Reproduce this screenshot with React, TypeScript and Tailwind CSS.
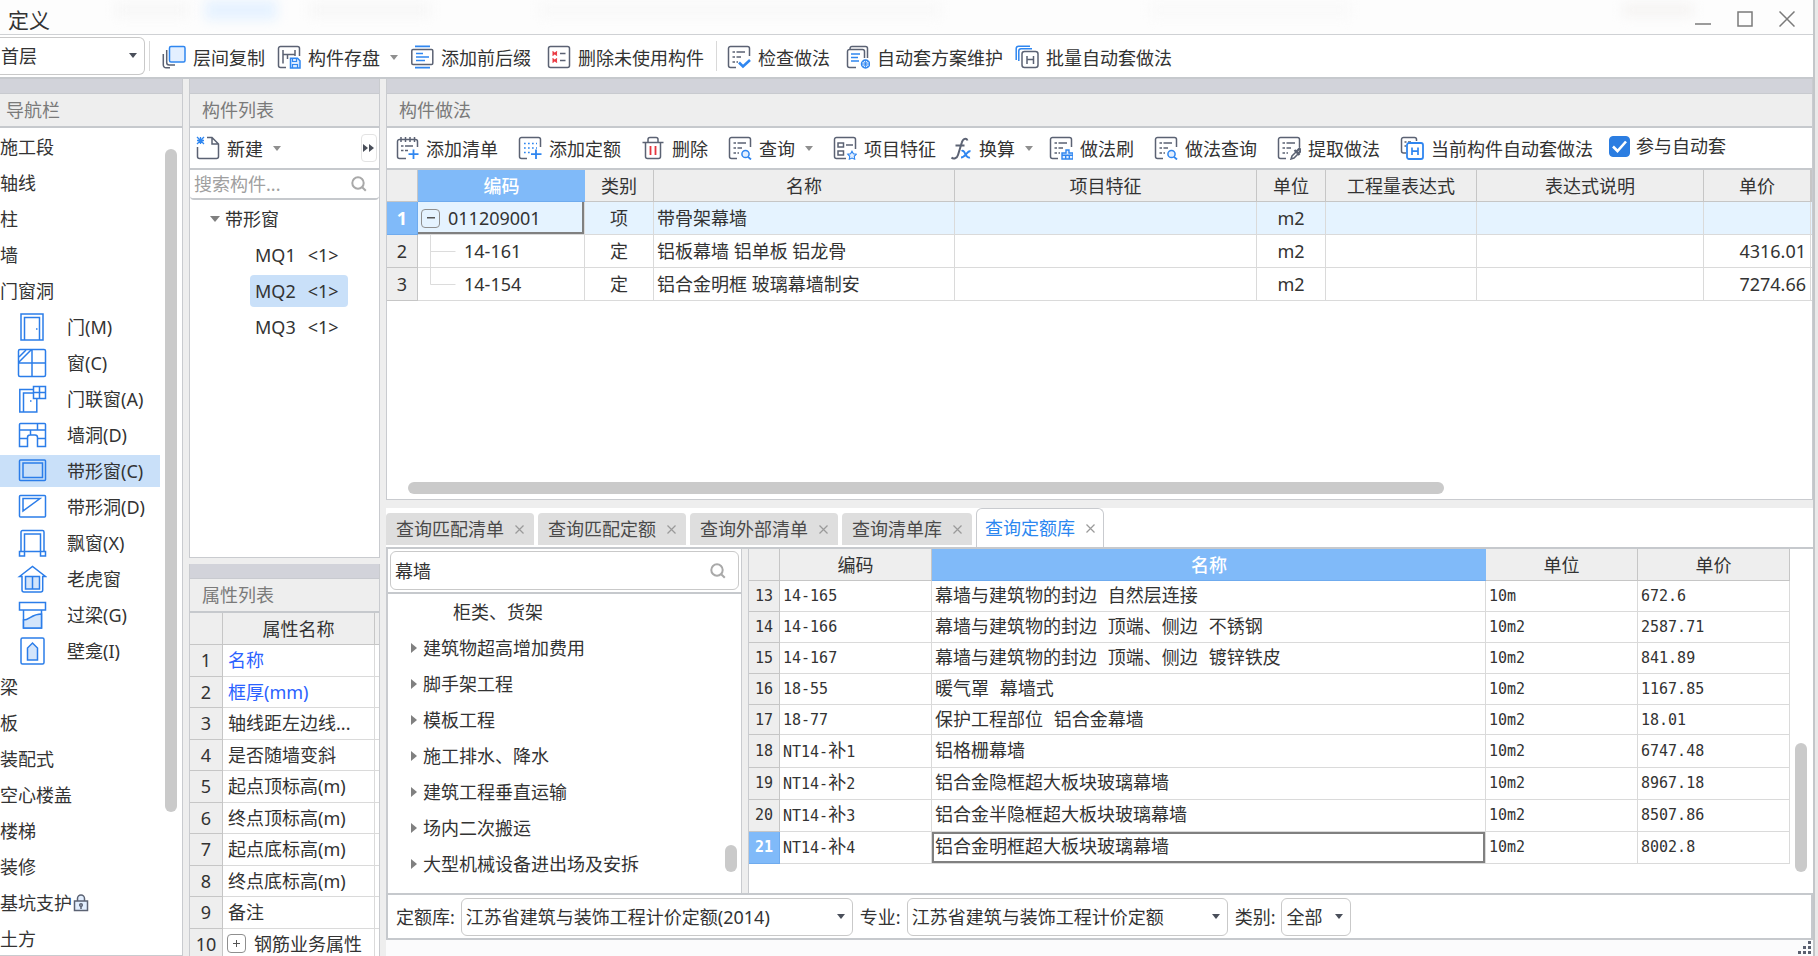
import React from 'react';

const INK = '#5b6273';
const BLUE = '#2f86f0';

function Icon({ children }: { children: React.ReactNode }) {
  return (
    <svg width="24" height="24" viewBox="0 0 24 24" fill="none" stroke={INK} strokeWidth="1.5" className="shrink-0" aria-hidden="true">
      {children}
    </svg>
  );
}

const OpenFrame = () => <path d="M9 22.5H3.5a2 2 0 0 1-2-2v-17a2 2 0 0 1 2-2h17a2 2 0 0 1 2 2V11" />;
const ListLines = () => <path d="M5.5 7H8M9.5 7H18M5.500 12H8M9.500 12H14M5.500 17H8M9.500 17H11" />;

const CopyLayersIcon = () => (
  <Icon>
    <path d="M4.700 5v12.500a2.500 2.500 0 0 0 2.500 2.500H13M1.300 9v11a2.700 2.700 0 0 0 2.700 2.700H8" />
    <rect x="7.500" y="1.500" width="15.500" height="15.500" rx="1.500" fill="#e3efff" stroke={BLUE} />
  </Icon>
);
const SaveIcon = () => (
  <Icon>
    <OpenFrame />
    <path d="M6 5v13.500M18 5v6M6 9.500h12M10.500 9.500V14" />
    <path d="M13.500 13.200h7l2.500 2.500V23h-9.500z" fill="#dbeaff" stroke={BLUE} />
    <path d="M15.500 13.500v3h4v-3M15.500 23v-3.500h5V23" stroke={BLUE} strokeWidth="1.200" />
  </Icon>
);
const AffixIcon = () => (
  <Icon>
    <rect x="1.800" y="4.500" width="21" height="15" rx="1.200" />
    <path d="M5 1.300h15M5 22.700h15M6 8.500h7M6 12h13M6 15.500h9" stroke={BLUE} strokeWidth="1.700" />
  </Icon>
);
const DeleteUnusedIcon = () => (
  <Icon>
    <rect x="1.500" y="1.500" width="21" height="21" rx="2" />
    <path d="M5.500 6.500l4.500 4M10 6.500l-4.500 4M5.500 8.500H10M5.500 13.500l4.500 4M10 13.500l-4.500 4M5.500 15.500H10" stroke="#ea3a42" strokeWidth="1.300" />
    <path d="M13 8.500h5.500M13 15.500h5.500" strokeWidth="1.700" />
  </Icon>
);
const CheckListIcon = () => (
  <Icon>
    <OpenFrame />
    <ListLines />
    <path d="M12 17.500l4 4 7-6.500" stroke={BLUE} strokeWidth="2.600" />
  </Icon>
);
const SchemeIcon = () => (
  <Icon>
    <path d="M10 22.500H3.500a2 2 0 0 1-2-2V6.500a2 2 0 0 1 2-2h13a2 2 0 0 1 2 2V13M4 4V3.500a2 2 0 0 1 2-2h13.500a2 2 0 0 1 2 2V13" />
    <path d="M5 9h9M5 12.500h7M5 16h8" stroke={BLUE} strokeWidth="1.700" />
    <circle cx="19.500" cy="19" r="4" fill="#dbeaff" stroke={BLUE} />
    <path d="M15.500 19h8M19.500 15v8M17 16l5 6M22 16l-5 6" stroke={BLUE} strokeWidth=".8" />
  </Icon>
);
const BatchIcon = () => (
  <Icon>
    <path d="M1.200 15V3.500a2.300 2.300 0 0 1 2.300-2.300H15M3.800 16V6a2.300 2.300 0 0 1 2.300-2.300H17" stroke={BLUE} />
    <rect x="7" y="6.500" width="16" height="16" rx="2.500" fill="#fff" />
    <path d="M12 11v8M18.500 11v8M12 14.500h6.500" />
  </Icon>
);
const AddListIcon = () => (
  <Icon>
    <path d="M11 22.500H4.500a2 2 0 0 1-2-2V5.500a2 2 0 0 1 2-2h16a2 2 0 0 1 2 2V11M6 1v5M10.500 1v5M15 1v5M19.500 1v5" />
    <path d="M6 10h2.500M10 10h8M6 14.500h2.500M10 14.500h3" />
    <path d="M18.500 13.500v9.500M13.500 18.200h10" stroke={BLUE} strokeWidth="1.800" />
  </Icon>
);
const AddQuotaIcon = () => (
  <Icon>
    <OpenFrame />
    <path d="M6 7.500h13M6 12h13M6 16.500h6" stroke={BLUE} strokeWidth="1.700" strokeDasharray="1.700 2.300" />
    <path d="M18 13.500V23M13 18.200h10.500" stroke={BLUE} strokeWidth="1.800" />
  </Icon>
);
const TrashIcon = () => (
  <Icon>
    <path d="M1.500 6.500h21M4.500 6.500V20.500a2 2 0 0 0 2 2h11a2 2 0 0 0 2-2V6.500M7 6V3.500a2 2 0 0 1 2-2h6a2 2 0 0 1 2 2V6" />
    <path d="M9.500 10v9M14.500 10v9" stroke="#e5343d" strokeWidth="1.800" />
  </Icon>
);
const QueryIcon = () => (
  <Icon>
    <OpenFrame />
    <ListLines />
    <circle cx="17.500" cy="18" r="3.600" fill="#e3efff" stroke={BLUE} />
    <path d="M20 20.800l3 2.700" stroke={BLUE} strokeWidth="1.800" />
  </Icon>
);
const FeatureIcon = () => (
  <Icon>
    <path d="M13 22.500H3.500a2 2 0 0 1-2-2v-17a2 2 0 0 1 2-2h17a2 2 0 0 1 2 2V13" />
    <path d="M5 7h5.500v4H5zM5 15h5.500v4H5zM13 9h7" />
    <path d="M19 15.200l1.400 2.500 2.900.5-2 2.100.4 2.900-2.700-1.200-2.700 1.200.4-2.900-2-2.100 2.900-.5z" fill="#e3efff" stroke={BLUE} strokeWidth="1.100" />
  </Icon>
);
const FxIcon = () => (
  <Icon>
    <path d="M19.500 4.500C18.500 2 15 2 13.800 6.500L10 19c-1 3.500-4.500 4.500-6.500 2.500M7.500 9.500h9" strokeWidth="2" />
    <path d="M13.500 15c4-2 3.500 8 8.500 6.500M22.500 15c-4 0-5 6.500-9.500 6.500" stroke={BLUE} strokeWidth="1.900" />
  </Icon>
);
const BrushIcon = () => (
  <Icon>
    <OpenFrame />
    <ListLines />
    <path d="M13 23v-6h4v-3h3v3h4v6z" fill="#e3efff" stroke={BLUE} strokeWidth="1.400" />
    <path d="M13 19.200h11M16.700 23v-3.500M20.300 23v-3.500" stroke={BLUE} strokeWidth="1.400" />
  </Icon>
);
const ExtractIcon = () => (
  <Icon>
    <OpenFrame />
    <ListLines />
    <path d="M14 23l1-3 4.500-4.500 2 2L17 22z" />
    <path d="M17.500 14l5 5M19.500 15.500l3-3 1.500 2-2.500 3z" strokeWidth="2.200" />
  </Icon>
);
const CurrentIcon = () => (
  <Icon>
    <path d="M6 17H3.500a2 2 0 0 1-2-2V3.500a2 2 0 0 1 2-2h11a2 2 0 0 1 2 2V5M4.500 6h2M4.500 10H6M8 6h3" />
    <rect x="7" y="7" width="16" height="16" rx="2" fill="#fff" stroke={BLUE} strokeWidth="1.800" />
    <path d="M12 11.500v7.500M18 11.500v7.500M12 15.200h6" stroke={BLUE} strokeWidth="1.700" />
  </Icon>
);
const NewIcon = () => (
  <Icon>
    <path d="M1.500 11v9.500a2 2 0 0 0 2 2h17a2 2 0 0 0 2-2V8l-6.500-6.500H11M16 1.500V8h6.500" />
    <path d="M1 1l7 7M8 1L1 8M1 4.500h7M4.500 1v7" stroke={BLUE} strokeWidth="1.300" />
  </Icon>
);

function Caret({ dark = false }: { dark?: boolean }) {
  return (
    <svg width="8" height="5" viewBox="0 0 8 5" className="shrink-0" aria-hidden="true">
      <path d="M0 0h8L4 5z" fill={dark ? '#4a4f5a' : '#8f8f8f'} />
    </svg>
  );
}

function Magnifier() {
  return (
    <svg width="16" height="16" viewBox="0 0 16 16" fill="none" stroke="#a9a9a9" strokeWidth="2" className="shrink-0" aria-hidden="true">
      <circle cx="7" cy="7" r="5.700" />
      <path d="M11.200 11.200l3.600 3.600" />
    </svg>
  );
}

type Tool = { label: string; icon: React.ReactNode; caret?: boolean; space?: 'tight' | 'normal' | 'wide' };

const spacing = { tight: 'mr-3', normal: 'mr-4', wide: 'mr-5' };

function ToolButton({ label, icon, caret, space = 'normal' }: Tool) {
  return (
    <button type="button" className={`flex shrink-0 items-center ${spacing[space]}`}>
      {icon}
      <span className="ml-[7px] whitespace-nowrap pt-0.5">{label}</span>
      {caret && (
        <span className="ml-2.5">
          <Caret />
        </span>
      )}
    </button>
  );
}

function PanelHead({ title, pad = 'pl-3' }: { title: string; pad?: string }) {
  return (
    <div className="shrink-0">
      <div className="h-[14px] bg-[#d2d3da]" />
      <h2 className={`flex h-[35px] items-center border-t border-b-2 border-t-[#c8cacf] border-b-[#c6c9cd] bg-[#eeeeee] text-[#7a7a7a] ${pad}`}>{title}</h2>
    </div>
  );
}

const G = ({ children }: { children: React.ReactNode }) => (
  <svg width="30" height="30" viewBox="0 0 30 30" fill="none" stroke="#2b7de9" strokeWidth="1.500" className="shrink-0" aria-hidden="true">
    {children}
  </svg>
);

const openings = [
  { label: '门(M)', icon: <G><path d="M4 28V2h22v26zM7.500 28V5.500h15V28M19 17h1.500" /></G> },
  { label: '窗(C)', icon: <G><rect x="1.500" y="1.500" width="27" height="27" rx="1.500" /><path d="M15 1.500v27M1.500 15h27M2 9l7-7M2 14L14 2" /></G> },
  { label: '门联窗(A)', icon: <G><path d="M16 5.500H2.800V28h17V14M6.500 28V9H16M13 17h1.500M16.500 2.500h12v12h-12zM22.500 2.500v12M16.500 8.500h12" /></G> },
  { label: '墙洞(D)', icon: <G><path d="M3.500 3.500h24a1 1 0 0 1 1 1V26.500h-8v-9a2.500 2.500 0 0 0-2.500-2.500h-5a2.500 2.500 0 0 0-2.500 2.500v9h-8V4.500a1 1 0 0 1 1-1zM2.500 10h26M20.500 3.500V10M13.500 10v5M2.500 18.500h8M20.500 18.500h8" /></G> },
  { label: '带形窗(C)', icon: <G><rect x="2.500" y="4" width="26" height="20.500" rx="1" /><rect x="6" y="7" width="19.500" height="14.500" /></G>, active: true },
  { label: '带形洞(D)', icon: <G><rect x="2.500" y="3.500" width="26" height="21.500" rx="1" /><path d="M6 6.500h17L6 19z" /></G> },
  { label: '飘窗(X)', icon: <G><path d="M4 23V4a1.500 1.500 0 0 1 1.500-1.500h20A1.500 1.500 0 0 1 27 4v19M7.500 23V6H23.500v17M7 23.500h17M2.500 23.500h5V28h-5zM23.500 23.500h5V28h-5z" /></G> },
  { label: '老虎窗', icon: <G><path d="M2.500 12.500L15.500 2.500l13 10h-2.800V26a2 2 0 0 1-2 2H7a2 2 0 0 1-2-2V12.500z" /><path d="M8.500 12.500h14V25h-14z" fill="#d3e5fb" /><path d="M15.500 12.500V25" /></G> },
  { label: '过梁(G)', icon: <G><path d="M2.500 2.500h26v7.500h-26zM6.500 10v18h18V10" /><path d="M6.500 20c6 0 8-6 18-6v14h-18z" fill="#d3e5fb" /></G> },
  { label: '壁龛(I)', icon: <G><rect x="4" y="2" width="23" height="26" rx="1.500" /><path d="M10.500 24V12l5-5 5 5v12z" fill="#d3e5fb" /></G> },
] as { label: string; icon: React.ReactNode; active?: boolean }[];

const bidRows = [
  { n: 1, code: '011209001', kind: '项', name: '带骨架幕墙', unit: 'm2', price: '' },
  { n: 2, code: '14-161', kind: '定', name: '铝板幕墙 铝单板 铝龙骨', unit: 'm2', price: '4316.01' },
  { n: 3, code: '14-154', kind: '定', name: '铝合金明框 玻璃幕墙制安', unit: 'm2', price: '7274.66' },
];

const quotaRows = [
  { n: 13, code: '14-165', name: '幕墙与建筑物的封边 自然层连接', unit: '10m', price: '672.6' },
  { n: 14, code: '14-166', name: '幕墙与建筑物的封边 顶端、侧边 不锈钢', unit: '10m2', price: '2587.71' },
  { n: 15, code: '14-167', name: '幕墙与建筑物的封边 顶端、侧边 镀锌铁皮', unit: '10m2', price: '841.89' },
  { n: 16, code: '18-55', name: '暖气罩 幕墙式', unit: '10m2', price: '1167.85' },
  { n: 17, code: '18-77', name: '保护工程部位 铝合金幕墙', unit: '10m2', price: '18.01' },
  { n: 18, code: 'NT14-补1', name: '铝格栅幕墙', unit: '10m2', price: '6747.48' },
  { n: 19, code: 'NT14-补2', name: '铝合金隐框超大板块玻璃幕墙', unit: '10m2', price: '8967.18' },
  { n: 20, code: 'NT14-补3', name: '铝合金半隐框超大板块玻璃幕墙', unit: '10m2', price: '8507.86' },
  { n: 21, code: 'NT14-补4', name: '铝合金明框超大板块玻璃幕墙', unit: '10m2', price: '8002.8' },
];

const properties = ['名称', '框厚(mm)', '轴线距左边线...', '是否随墙变斜', '起点顶标高(m)', '终点顶标高(m)', '起点底标高(m)', '终点底标高(m)', '备注', '钢筋业务属性'];

const chapters = ['建筑物超高增加费用', '脚手架工程', '模板工程', '施工排水、降水', '建筑工程垂直运输', '场内二次搬运', '大型机械设备进出场及安拆'];

const mono = "font-['DejaVu_Sans_Mono','Noto_Sans_CJK_SC',monospace]";
const th = 'border-r border-b border-[#c6c6c6] bg-[#eeeeee] p-0 font-normal';
const rowNo = 'border-r border-b border-[#c6c6c6] bg-[#eeeeee] p-0 text-center';
const rowNoOn = 'border-r border-b border-[#6fabee] bg-[#80baf9] p-0 text-center font-bold text-white';
const td = 'border-r border-b border-[#dadada] p-0';

function TitleBar() {
  const btn = 'flex size-6 items-center justify-center';
  return (
    <header className="relative flex h-[34px] shrink-0 items-center overflow-hidden bg-[#fdfdfd]">
      <div className="absolute top-0 left-[205px] h-5 w-[72px] bg-[#e6f2ff] blur-[6px]" />
      <div className="absolute top-1 left-[116px] h-3 w-[72px] bg-[#f6f6f6] blur-[6px]" />
      <div className="absolute top-1 left-[310px] h-3 w-[120px] bg-[#f6f6f6] blur-[6px]" />
      <div className="absolute top-1 left-[540px] h-3 w-[400px] bg-[#f8f8f8] blur-[6px]" />
      <div className="absolute top-1 left-[1150px] h-3 w-[200px] bg-[#f9f9f9] blur-[6px]" />
      <div className="absolute top-1 right-[120px] h-3 w-[70px] bg-[#f5f3f2] blur-[6px]" />
      <h1 className="relative ml-2 pt-1.5 text-[21px] leading-6 text-[#333333]">定义</h1>
      <div className="relative mr-[14px] ml-auto flex gap-[18px] pt-1">
        <button type="button" aria-label="最小化" className={btn}>
          <svg width="16" height="16" viewBox="0 0 16 16" stroke="#7a7a7a" strokeWidth="1.500" fill="none"><path d="M0 13h16" /></svg>
        </button>
        <button type="button" aria-label="最大化" className={btn}>
          <svg width="16" height="16" viewBox="0 0 16 16" stroke="#7a7a7a" strokeWidth="1.500" fill="none"><rect x="1" y="1" width="14" height="14" /></svg>
        </button>
        <button type="button" aria-label="关闭" className={btn}>
          <svg width="16" height="16" viewBox="0 0 16 16" stroke="#7a7a7a" strokeWidth="1.500" fill="none"><path d="M.5.5l15 15M15.500.5l-15 15" /></svg>
        </button>
      </div>
    </header>
  );
}

function MainToolbar() {
  return (
    <div className="flex h-[45px] shrink-0 items-center border-t border-b-2 border-t-[#cfd1d4] border-b-[#c6c9cd] bg-white">
      <div className="relative">
        <select aria-label="楼层" className="block h-[38px] w-[145px] appearance-none rounded-r-md border border-l-0 border-[#c9c9c9] bg-white pl-px">
          <option>首层</option>
        </select>
        <span className="pointer-events-none absolute top-4 right-2"><Caret dark /></span>
      </div>
      <span className="mr-3 ml-1 h-[30px] w-px bg-[#d9d9d9]" />
      <div className="flex items-center pt-0.5">
        <ToolButton label="层间复制" icon={<CopyLayersIcon />} space="tight" />
        <ToolButton label="构件存盘" icon={<SaveIcon />} caret space="tight" />
        <ToolButton label="添加前后缀" icon={<AffixIcon />} />
        <ToolButton label="删除未使用构件" icon={<DeleteUnusedIcon />} space="tight" />
      </div>
      <span className="mr-2.5 h-[30px] w-px bg-[#d9d9d9]" />
      <div className="flex items-center pt-0.5">
        <ToolButton label="检查做法" icon={<CheckListIcon />} />
        <ToolButton label="自动套方案维护" icon={<SchemeIcon />} space="tight" />
        <ToolButton label="批量自动套做法" icon={<BatchIcon />} />
      </div>
    </div>
  );
}

function NavRow({ label, lock }: { label: string; lock?: boolean }) {
  return (
    <li className="flex h-9 items-center">
      {label}
      {lock && (
        <svg width="16" height="18" viewBox="0 0 16 18" fill="none" stroke={INK} strokeWidth="1.500" className="ml-px" aria-hidden="true">
          <path d="M1.500 7h13v9.500h-13zM4.500 7V4.500a3.500 3.500 0 0 1 7 0V7M8 12v3" fill="#e3efff" />
          <circle cx="8" cy="11" r="1.300" />
        </svg>
      )}
    </li>
  );
}

function Navigator() {
  return (
    <nav className="flex w-[183px] shrink-0 flex-col overflow-hidden border-r border-b border-[#c9cbcf] bg-white">
      <PanelHead title="导航栏" pad="pl-1.5" />
      <div className="relative min-h-0 flex-1 overflow-hidden pt-px">
        <ul>
          {['施工段', '轴线', '柱', '墙', '门窗洞'].map((t) => <NavRow key={t} label={t} />)}
          {openings.map((o) => (
            <li key={o.label} className="flex h-9 items-center">
              <div className={`flex h-8 w-[160px] items-center gap-5 pl-[17px] ${o.active ? 'bg-[#c9e0f9]' : ''}`}>
                {o.icon}
                <span className="whitespace-nowrap">{o.label}</span>
              </div>
            </li>
          ))}
          {['梁', '板', '装配式', '空心楼盖', '楼梯', '装修'].map((t) => <NavRow key={t} label={t} />)}
          <NavRow label="基坑支护" lock />
          <NavRow label="土方" />
        </ul>
        <div className="absolute top-[21px] right-[5px] h-[663px] w-3 rounded-full bg-[#cacaca]" />
      </div>
    </nav>
  );
}

function ComponentList() {
  return (
    <section className="flex min-h-0 flex-1 flex-col overflow-hidden border border-t-0 border-[#c9cbcf] bg-white">
      <PanelHead title="构件列表" />
      <div className="flex h-[42px] shrink-0 items-center border-b-2 border-[#c6c9cd] pl-1.5">
        <ToolButton label="新建" icon={<NewIcon />} caret />
        <button type="button" aria-label="更多" className="mr-0.5 ml-auto flex h-7 w-4 items-center justify-center rounded border border-[#e3e3e3]">
          <svg width="12" height="8" viewBox="0 0 12 8" fill="#4a4f5a"><path d="M0 0l5 4-5 4zM6 0l5 4-5 4z" /></svg>
        </button>
      </div>
      <div className="flex h-[30px] shrink-0 items-center rounded border-b-2 border-[#c6c9cd] pr-3 pl-1">
        <input aria-label="搜索构件" placeholder="搜索构件..." className="min-w-0 flex-1 outline-none placeholder:text-[#a0a0a0]" />
        <Magnifier />
      </div>
      <ul className="pt-px">
        <li className="flex h-9 items-center gap-[5px] pl-5">
          <svg width="10" height="6" viewBox="0 0 10 6" aria-hidden="true"><path d="M0 0h10L5 6z" fill="#808080" /></svg>
          带形窗
        </li>
        {['MQ1', 'MQ2', 'MQ3'].map((m) => (
          <li key={m} className="flex h-9 items-center pl-[60px]">
            <span className={`flex h-8 w-[98px] items-center gap-3 rounded pl-[5px] ${m === 'MQ2' ? 'bg-[#c9e0f9]' : ''}`}>
              <span>{m}</span>
              <span>&lt;1&gt;</span>
            </span>
          </li>
        ))}
      </ul>
    </section>
  );
}

function PropertyList() {
  return (
    <section className="h-[392px] shrink-0 overflow-hidden border-x border-[#c9cbcf] bg-white">
      <PanelHead title="属性列表" />
      <table className="h-[347px] w-full table-fixed border-separate border-spacing-0">
        <colgroup>
          <col className="w-[33px]" />
          <col />
          <col className="w-1" />
        </colgroup>
        <thead>
          <tr className="h-8">
            <th className={th} />
            <th className={th}>属性名称</th>
            <th className="border-b border-[#c6c6c6] bg-[#eeeeee] p-0" />
          </tr>
        </thead>
        <tbody>
          {properties.map((p, i) => (
            <tr key={p}>
              <td className={rowNo}>{i + 1}</td>
              <td className={`${td} whitespace-nowrap ${i < 2 ? 'text-[#2b62ff]' : ''}`}>
                {i === 9 ? (
                  <span className="flex items-center gap-2 pl-1">
                    <button type="button" aria-label="展开" className="flex size-[19px] items-center justify-center rounded border border-[#8f8f8f]">
                      <svg width="7" height="7" viewBox="0 0 7 7" stroke="#555" fill="none"><path d="M0 3.500h7M3.500 0v7" /></svg>
                    </button>
                    {p}
                  </span>
                ) : (
                  <span className="pl-[5px]">{p}</span>
                )}
              </td>
              <td className="border-b border-[#dadada] p-0" />
            </tr>
          ))}
        </tbody>
      </table>
    </section>
  );
}

function CodeCell({ n, code }: { n: number; code: string }) {
  if (n === 1) {
    return (
      <div className="flex h-8 items-center gap-2 pl-[3px]">
        <button type="button" aria-label="折叠" className="flex size-[19px] items-center justify-center rounded-sm border border-[#8f8f8f]">
          <svg width="8" height="2" viewBox="0 0 8 2"><path d="M0 0h8v1.500H0z" fill="#555" /></svg>
        </button>
        {code}
      </div>
    );
  }
  return (
    <div className="flex h-8 items-center gap-2 pl-3">
      <svg width="26" height="32" viewBox="0 0 26 32" stroke="#dcdcdc" fill="none" aria-hidden="true">
        <path d={n === 2 ? 'M.5 0v32M.5 16.500h25' : 'M.5 0v16.500h25'} />
      </svg>
      {code}
    </div>
  );
}

function BidTable() {
  return (
    <table className="w-full table-fixed border-separate border-spacing-0">
      <colgroup>
        <col className="w-[31px]" />
        <col className="w-[167px]" />
        <col className="w-[69px]" />
        <col />
        <col className="w-[302px]" />
        <col className="w-[69px]" />
        <col className="w-[151px]" />
        <col className="w-[227px]" />
        <col className="w-[107px]" />
        <col className="w-px" />
      </colgroup>
      <thead>
        <tr className="h-8">
          <th className={th} />
          <th className="border-b border-[#6fabee] bg-[#80baf9] p-0 font-medium text-white">编码</th>
          {['类别', '名称', '项目特征', '单位', '工程量表达式', '表达式说明', '单价', ''].map((h, i) => <th key={i} className={th}>{h}</th>)}
        </tr>
      </thead>
      <tbody>
        {bidRows.map((r) => (
          <tr key={r.n} className={`h-[33px] ${r.n === 1 ? 'bg-[#e5f3ff]' : ''}`}>
            <td className={r.n === 1 ? rowNoOn : rowNo}>{r.n}</td>
            <td className={`${td} ${r.n === 1 ? 'shadow-[inset_-2px_-2px_0_#808080]' : ''}`}><CodeCell n={r.n} code={r.code} /></td>
            <td className={`${td} text-center`}>{r.kind}</td>
            <td className={`${td} pl-[3px]`}>{r.name}</td>
            <td className={td} />
            <td className={`${td} text-center`}>{r.unit}</td>
            <td className={td} />
            <td className={td} />
            <td className={`${td} pr-1 text-right`}>{r.price}</td>
            <td className="border-b border-[#dadada] p-0" />
          </tr>
        ))}
      </tbody>
    </table>
  );
}

function MethodPanel() {
  return (
    <section className="flex min-h-0 flex-1 flex-col overflow-hidden border border-t-0 border-[#c9cbcf] bg-white">
      <PanelHead title="构件做法" />
      <div className="flex h-[42px] shrink-0 items-center border-b-2 border-[#c6c9cd] pl-2">
        <ToolButton label="添加清单" icon={<AddListIcon />} space="wide" />
        <ToolButton label="添加定额" icon={<AddQuotaIcon />} space="wide" />
        <ToolButton label="删除" icon={<TrashIcon />} space="wide" />
        <ToolButton label="查询" icon={<QueryIcon />} caret space="wide" />
        <ToolButton label="项目特征" icon={<FeatureIcon />} space="tight" />
        <ToolButton label="换算" icon={<FxIcon />} caret />
        <ToolButton label="做法刷" icon={<BrushIcon />} space="wide" />
        <ToolButton label="做法查询" icon={<QueryIcon />} space="wide" />
        <ToolButton label="提取做法" icon={<ExtractIcon />} space="wide" />
        <ToolButton label="当前构件自动套做法" icon={<CurrentIcon />} />
        <label className="flex shrink-0 items-center gap-1.5 pb-1">
          <span className="relative flex">
            <input type="checkbox" defaultChecked className="peer size-[21px] appearance-none rounded-sm border border-[#2b7de1] bg-white checked:bg-[#2b7de1]" />
            <svg width="21" height="21" viewBox="0 0 21 21" fill="none" stroke="#fff" strokeWidth="2.600" className="pointer-events-none absolute inset-0 hidden peer-checked:block">
              <path d="M4 10.500l4.500 4.500L17 5.500" />
            </svg>
          </span>
          参与自动套
        </label>
      </div>
      <BidTable />
      <div className="mt-auto mb-[5px] ml-[21px] h-3 w-[1036px] rounded-full bg-[#cacaca]" />
    </section>
  );
}

function CloseX() {
  return (
    <svg width="9" height="9" viewBox="0 0 9 9" stroke="#9a9a9a" strokeWidth="1.200" fill="none" aria-hidden="true">
      <path d="M.5.5l8 8M8.500.5l-8 8" />
    </svg>
  );
}

function QueryTabs() {
  return (
    <div role="tablist" className="flex h-[41px] shrink-0 items-end gap-1 border-b-2 border-[#c6c9cd] bg-white">
      {['查询匹配清单', '查询匹配定额', '查询外部清单', '查询清单库'].map((t) => (
        <button key={t} type="button" role="tab" aria-selected="false" className="mb-0.5 flex h-8 items-center gap-[11px] rounded-t bg-[#dedede] px-2.5 text-[#4a4a4a]">
          {t}
          <CloseX />
        </button>
      ))}
      <button type="button" role="tab" aria-selected="true" className="flex h-[39px] items-center gap-[11px] rounded-t-md border border-b-0 border-[#c9cbcf] bg-white px-2 text-[#2b87f0]">
        查询定额库
        <CloseX />
      </button>
    </div>
  );
}

function ChapterTree() {
  return (
    <div className="relative flex w-[356px] shrink-0 flex-col overflow-hidden border-x border-l-2 border-[#c9cbcf] bg-white">
      <div className="shrink-0 border-b-2 border-[#c6c9cd] p-0.5">
        <div className="flex h-[39px] items-center rounded-md border border-[#c9c9c9] pr-3 pl-1">
          <input aria-label="搜索定额" defaultValue="幕墙" className="min-w-0 flex-1 outline-none" />
          <Magnifier />
        </div>
      </div>
      <ul>
        <li className="flex h-9 items-center pl-[65px]">柜类、货架</li>
        {chapters.map((c) => (
          <li key={c} className="flex h-9 items-center gap-1.5 pl-[23px]">
            <svg width="6" height="10" viewBox="0 0 6 10" aria-hidden="true"><path d="M0 0l6 5-6 5z" fill="#808080" /></svg>
            {c}
          </li>
        ))}
      </ul>
      <div className="absolute right-1 bottom-[21px] h-[27px] w-3 rounded-full bg-[#cacaca]" />
    </div>
  );
}

function QuotaTable() {
  return (
    <div className="flex min-w-0 flex-1 items-start border-l border-[#c9cbcf] bg-white">
      <table className="h-[315px] min-w-0 flex-1 table-fixed border-separate border-spacing-0">
        <colgroup>
          <col className="w-[31px]" />
          <col className="w-[152px]" />
          <col />
          <col className="w-[152px]" />
          <col className="w-[152px]" />
        </colgroup>
        <thead>
          <tr className="h-8">
            <th className={th} />
            <th className={th}>编码</th>
            <th className="border-b border-[#6fabee] bg-[#80baf9] p-0 font-medium text-white">名称</th>
            <th className={th}>单位</th>
            <th className={th}>单价</th>
          </tr>
        </thead>
        <tbody className={mono}>
          {quotaRows.map((r) => {
            const on = r.n === 21;
            const [head, tail] = r.code.split('补');
            return (
              <tr key={r.n} className="text-[15px]">
                <td className={on ? rowNoOn : rowNo}>{r.n}</td>
                <td className={`${td} pl-[3px]`}>
                  {head}
                  {tail && <span className="text-lg leading-6">补</span>}
                  {tail}
                </td>
                <td className={`${td} pl-[3px] text-lg leading-6 whitespace-nowrap ${on ? 'shadow-[inset_0_0_0_2px_#808080]' : ''}`}>{r.name}</td>
                <td className={`${td} pl-[3px]`}>{r.unit}</td>
                <td className={`${td} pl-[3px]`}>{r.price}</td>
              </tr>
            );
          })}
        </tbody>
      </table>
      <div className="mt-[194px] mr-1.5 ml-[5px] h-[129px] w-3 shrink-0 rounded-full bg-[#cacaca]" />
    </div>
  );
}

function Picker({ id, label, value, width }: { id: string; label: string; value: string; width: string }) {
  return (
    <div className="flex items-center gap-1.5">
      <label htmlFor={id} className="whitespace-nowrap">{label}</label>
      <div className="relative">
        <select id={id} className={`block h-[38px] appearance-none rounded-md border border-[#c9c9c9] bg-white pl-1 ${width}`}>
          <option>{value}</option>
        </select>
        <span className="pointer-events-none absolute top-4 right-2"><Caret dark /></span>
      </div>
    </div>
  );
}

function QueryPanel() {
  return (
    <section className="flex shrink-0 flex-col">
      <QueryTabs />
      <div className="flex h-[344px] gap-1.5 bg-[#eeeeee]">
        <ChapterTree />
        <QuotaTable />
      </div>
      <div className="flex h-[47px] items-center gap-[7px] border-2 border-[#c6c9cd] bg-white pl-2">
        <Picker id="lib" label="定额库:" value="江苏省建筑与装饰工程计价定额(2014)" width="w-[392px]" />
        <Picker id="major" label="专业:" value="江苏省建筑与装饰工程计价定额" width="w-[321px]" />
        <Picker id="kind" label="类别:" value="全部" width="w-[70px]" />
      </div>
    </section>
  );
}

export default function App() {
  return (
    <div className="flex h-screen overflow-hidden bg-[#e9e9e9] font-['Noto_Sans','Noto_Sans_CJK_SC',sans-serif] text-lg leading-6 text-[#333333]">
      <div className="flex min-w-0 flex-1 flex-col border-r-2 border-[#c3c6c9] bg-[#eeeeee]">
        <TitleBar />
        <MainToolbar />
        <div className="flex min-h-0 flex-1 gap-1.5">
          <Navigator />
          <div className="flex w-[191px] shrink-0 flex-col gap-1.5">
            <ComponentList />
            <PropertyList />
          </div>
          <main className="flex min-w-0 flex-1 flex-col">
            <MethodPanel />
            <div className="h-2 shrink-0" />
            <QueryPanel />
            <footer className="flex h-4 shrink-0 items-end justify-end bg-[#fbfbfc] pr-0.5 pb-0.5">
              <svg width="13" height="13" viewBox="0 0 13 13" fill="#5a6070" aria-hidden="true">
                <path d="M10 0h3v3h-3zM5 5h3v3H5zM10 5h3v3h-3zM0 10h3v3H0zM5 10h3v3H5zM10 10h3v3h-3z" />
              </svg>
            </footer>
          </main>
        </div>
      </div>
      <div className="w-[3px] shrink-0" />
    </div>
  );
}
